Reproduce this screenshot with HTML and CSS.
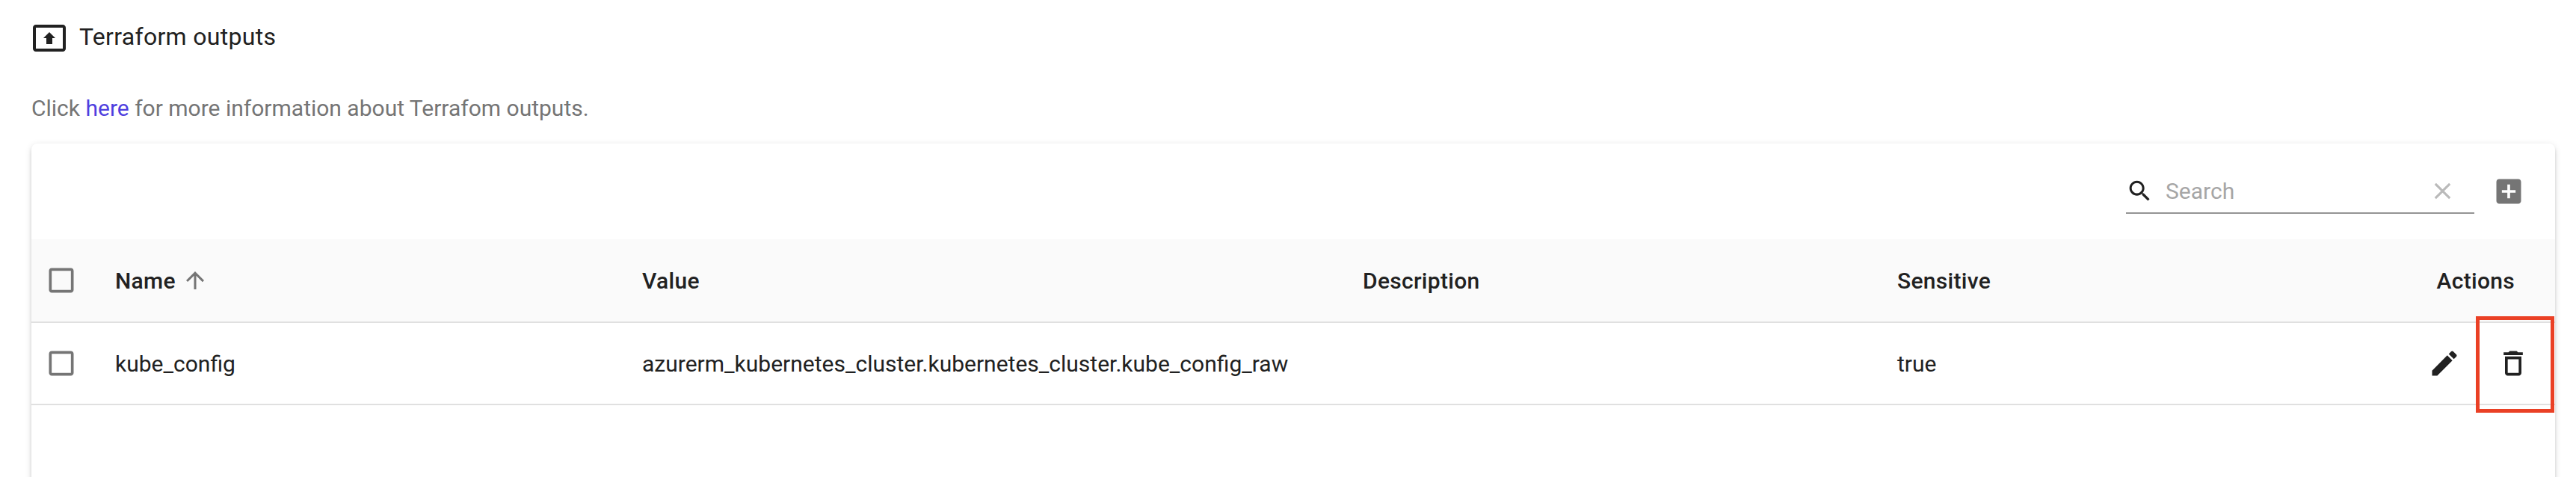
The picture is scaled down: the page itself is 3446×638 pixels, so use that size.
FILE: index.html
```html
<!DOCTYPE html>
<html lang="en">
<head>
<meta charset="utf-8">
<title>Terraform outputs</title>
<link rel="stylesheet" href="styles.css">
</head>
<body>
<main class="page">
  <h1 class="title">
    <svg class="icon title-icon" viewBox="0 0 24 24"><path d="M21 3H3c-1.11 0-2 .89-2 2v14c0 1.11.89 2 2 2h18c1.11 0 2-.89 2-2V5c0-1.11-.89-2-2-2zm0 16.02H3V4.98h18v14.04zM10 12H8l4-4 4 4h-2v4h-4v-4z"/></svg>
    <span>Terraform outputs</span>
  </h1>
  <p class="intro">Click <a class="link" href="#">here</a> for more information about Terrafom outputs.</p>
  <section class="card">
    <div class="toolbar">
      <div class="search">
        <svg class="icon search-icon" viewBox="0 0 24 24"><path d="M15.5 14h-.79l-.28-.27C15.41 12.59 16 11.11 16 9.5 16 5.91 13.09 3 9.5 3S3 5.91 3 9.5 5.91 16 9.5 16c1.61 0 3.09-.59 4.23-1.57l.27.28v.79l5 4.99L20.49 19l-4.99-5zm-6 0C7.01 14 5 11.99 5 9.5S7.01 5 9.5 5 14 7.01 14 9.5 11.99 14 9.5 14z"/></svg>
        <span class="placeholder">Search</span>
        <svg class="icon clear-icon" viewBox="0 0 24 24"><path d="M19 6.41L17.59 5 12 10.59 6.41 5 5 6.41 10.59 12 5 17.59 6.41 19 12 13.41 17.59 19 19 17.59 13.41 12z"/></svg>
      </div>
      <svg class="icon add-icon" viewBox="0 0 24 24"><path d="M19 3H5c-1.11 0-2 .9-2 2v14c0 1.1.89 2 2 2h14c1.1 0 2-.9 2-2V5c0-1.1-.9-2-2-2zm-2 10h-4v4h-2v-4H7v-2h4V7h2v4h4v2z"/></svg>
    </div>
    <div class="row head">
      <div class="check"><svg class="icon box" viewBox="0 0 24 24"><path d="M19 5v14H5V5h14m0-2H5c-1.1 0-2 .9-2 2v14c0 1.1.9 2 2 2h14c1.1 0 2-.9 2-2V5c0-1.1-.9-2-2-2z"/></svg></div>
      <div class="cell name"><span>Name</span><svg class="icon sort" viewBox="0 0 24 24"><path d="M4 12l1.41 1.41L11 7.83V20h2V7.83l5.58 5.59L20 12l-8-8-8 8z"/></svg></div>
      <div class="cell">Value</div>
      <div class="cell">Description</div>
      <div class="cell">Sensitive</div>
      <div class="cell actions-label">Actions</div>
    </div>
    <div class="row">
      <div class="check"><svg class="icon box" viewBox="0 0 24 24"><path d="M19 5v14H5V5h14m0-2H5c-1.1 0-2 .9-2 2v14c0 1.1.9 2 2 2h14c1.1 0 2-.9 2-2V5c0-1.1-.9-2-2-2z"/></svg></div>
      <div class="cell">kube_config</div>
      <div class="cell">azurerm_kubernetes_cluster.kubernetes_cluster.kube_config_raw</div>
      <div class="cell"></div>
      <div class="cell">true</div>
      <div class="cell actions">
        <svg class="icon action" viewBox="0 0 24 24"><path d="M3 17.25V21h3.75L17.81 9.94l-3.75-3.75L3 17.25zM20.71 7.04c.39-.39.39-1.02 0-1.41l-2.34-2.34a.9959.9959 0 0 0-1.41 0l-1.83 1.83 3.75 3.75 1.83-1.83z"/></svg>
        <span class="delete">
          <svg class="icon action" viewBox="0 0 24 24"><path d="M6 19c0 1.1.9 2 2 2h8c1.1 0 2-.9 2-2V7H6v12zM8 9h8v10H8V9zm7.5-5l-1-1h-5l-1 1H5v2h14V4z"/></svg>
          <span class="highlight"></span>
        </span>
      </div>
    </div>
  </section>
</main>
</body>
</html>
```
FILE: styles.css
```css
* { box-sizing: border-box; }

body {
  margin: 0;
  background: #fff;
  color: #212121;
  font-family: Roboto, "Liberation Sans", sans-serif;
  font-size: 30px;
}

.page {
  height: 638px;
  padding: 27px 28px 0 42px;
  overflow: hidden;
}

.icon {
  display: block;
  flex: none;
  fill: currentColor;
}

.title {
  display: flex;
  align-items: center;
  gap: 16px;
  height: 48px;
  margin: 0 0 50px;
  font-size: 32px;
  font-weight: 400;
  letter-spacing: 0.3px;
  line-height: 44px;
}

.title span { padding-bottom: 4px; }

.title-icon { width: 48px; height: 48px; }

.intro {
  height: 40px;
  margin: 0 0 27px;
  color: #757575;
  line-height: 40px;
}

.link { color: #4f3fdf; text-decoration: none; }

.card {
  height: 520px;
  border-radius: 8px;
  background: #fff;
  box-shadow: 0 6px 2px -4px rgba(0, 0, 0, 0.2), 0 4px 4px 0 rgba(0, 0, 0, 0.14), 0 2px 10px 0 rgba(0, 0, 0, 0.12);
}

.toolbar {
  display: flex;
  justify-content: flex-end;
  align-items: center;
  gap: 24px;
  height: 128px;
  padding-right: 40px;
}

.search {
  display: flex;
  align-items: center;
  width: 466px;
  height: 60px;
  border-bottom: 2px solid #949494;
}

.search-icon { width: 37px; height: 37px; }

.placeholder {
  flex: 1;
  padding-left: 16px;
  color: #a6a6a6;
}

.clear-icon {
  width: 37px;
  height: 37px;
  margin-right: 24px;
  color: #bababa;
}

.add-icon {
  width: 44px;
  height: 44px;
  color: #757575;
}

.row {
  display: grid;
  grid-template-columns: 112px 705px 964px 715px 500px 1fr;
  align-items: center;
  height: 110px;
  border-bottom: 2px solid #e0e0e0;
}

.row .cell { white-space: nowrap; }

.head {
  height: 112px;
  background: #fafafa;
  font-weight: 500;
  letter-spacing: 0.3px;
}

.check { padding-left: 18px; }

.box { width: 44px; height: 44px; color: #757575; }

.name { display: flex; align-items: center; gap: 8px; }

.sort { width: 36px; height: 36px; color: #757575; }

.actions-label { padding-right: 54px; text-align: right; }

.actions {
  display: flex;
  justify-content: flex-end;
  gap: 48px;
  padding-right: 34px;
}

.action { width: 44px; height: 44px; }

.delete { position: relative; }

/* Callout frame around the delete button */
.highlight {
  position: absolute;
  top: -41px;
  left: -28px;
  width: 105px;
  height: 129px;
  border: 5px solid #ea4025;
}
```
